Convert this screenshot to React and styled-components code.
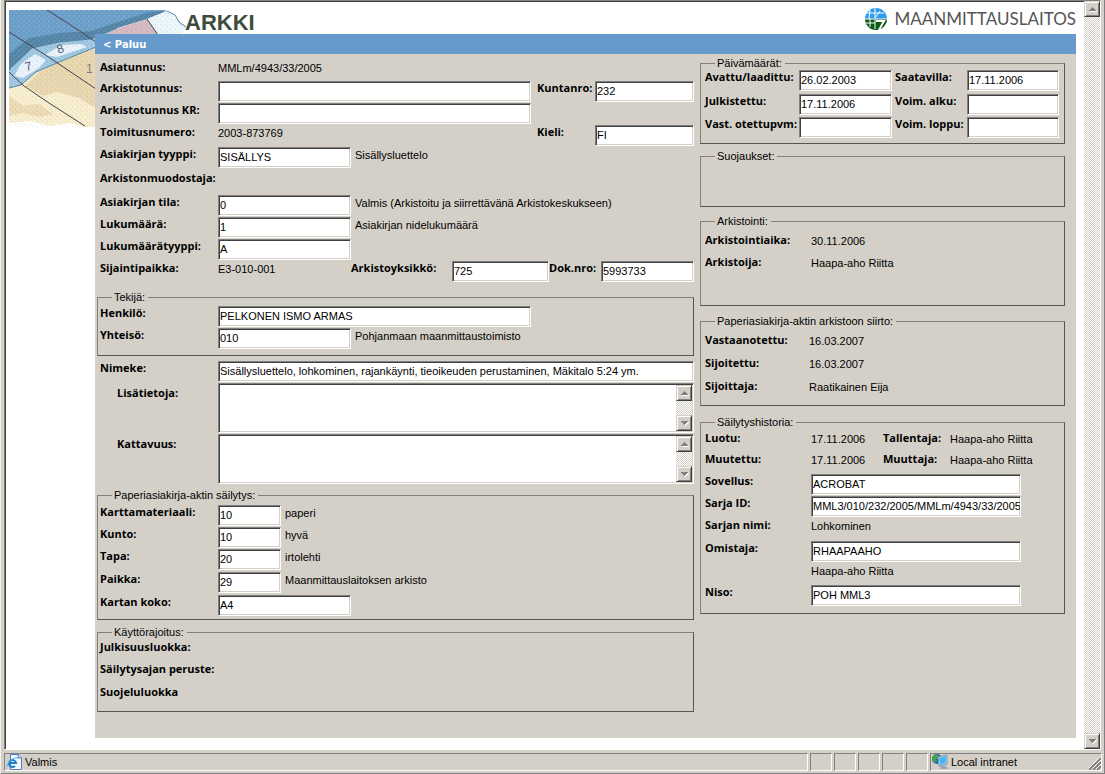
import React from 'react';
import styled, { createGlobalStyle } from 'styled-components';

const GlobalStyle = createGlobalStyle`
  * {
    box-sizing: border-box;
  }

  body {
    margin: 0;
    background-color: #d4d0c8;
    color: #000;
    font-family: "Liberation Sans", Arial, sans-serif;
    font-size: 11px;
  }
`;

const Window = styled.div`
  display: flex;
  flex-direction: column;
  min-height: 100vh;
  padding: 0 2px 2px 3px;
  border-left: 1px solid #f4f2ee;
  border-right: 1px solid #808080;
  border-bottom: 1px solid #808080;
`;

const Pane = styled.div`
  display: flex;
  flex: 1;
  margin-right: 1px;
  border: 1px solid;
  border-color: #808080 #fff #fff #808080;
`;

const Page = styled.main`
  position: relative;
  flex: 1;
  display: flex;
  flex-direction: column;
  padding: 0 8px 11px 89px;
  background-color: #fff;
  border: solid #404040;
  border-width: 1px 0 0 1px;
`;

const Header = styled.header`
  display: flex;
  justify-content: space-between;
  height: 32px;
  padding-left: 90px;
`;

const Title = styled.h1`
  margin: 8px 0 0;
  font-size: 22px;
  line-height: 26px;
  color: #3d4c3d;
`;

const Brand = styled.div`
  display: flex;
  align-items: center;
  gap: 8px;
  padding-top: 1px;
  color: #555;
  font-family: Lato, sans-serif;
  font-size: 17px;
`;

const MapArt = styled.svg`
  position: absolute;
  left: 3px;
  top: 8px;
`;

const Sheet = styled.div`
  position: relative;
  flex: 1;
  background-color: #d4d0c8;
`;

const NavBar = styled.nav`
  height: 20px;
  padding-left: 8px;
  background-color: #6699cc;
  line-height: 20px;
`;

const BackLink = styled.a`
  color: #fff;
  font: bold 10px "DejaVu Sans", Verdana, sans-serif;
  text-decoration: none;
`;

const Columns = styled.form`
  display: grid;
  grid-template-columns: minmax(0, 597fr) minmax(0, 365fr);
  gap: 6px;
  padding: 3px 11px 26px 2px;
`;

const LeftColumn = styled.div`
  padding-top: 3px;
`;

const RightColumn = styled.div``;

const Block = styled.div`
  padding-left: 3px;
  padding-top: ${(p) => p.$top || 0}px;
`;

const Group = styled.fieldset`
  min-width: 0;
  margin: ${(p) => p.$gap || 0}px 0 0;
  padding: ${(p) => p.$top || 0}px 0 ${(p) => p.$bottom || 0}px ${(p) => p.$left || 2}px;
  border: 1px solid;
  border-color: #808080 #555 #555 #808080;
`;

const Legend = styled.legend`
  margin-left: ${(p) => p.$indent || 12}px;
  padding: 0 3px 0 2px;
  line-height: 13px;
`;

const Row = styled.div`
  display: flex;
  align-items: flex-start;
  min-height: ${(p) => p.$h || 22}px;
`;

const labelFont = `
  flex: none;
  font: bold 11px/13px "Open Sans", Verdana, sans-serif;
  white-space: nowrap;
`;

const Label = styled.label`
  ${labelFont}
  width: ${(p) => p.$w || 118}px;
  padding-left: ${(p) => p.$indent || 0}px;
  padding-top: ${(p) => (p.$indent ? 3 : 0)}px;
`;

const Caption = styled.span`
  ${labelFont}
  width: ${(p) => p.$w || 118}px;
`;

const Value = styled.span`
  flex: none;
  width: ${(p) => (p.$w ? `${p.$w}px` : 'auto')};
  line-height: 17px;
  white-space: nowrap;
`;

const Note = styled(Value)`
  margin-left: 4px;
`;

const Side = styled.div`
  display: flex;
  margin-left: auto;
  padding-right: ${(p) => p.$end || 0}px;
`;

const Input = styled.input`
  width: ${(p) => (p.$w ? `${p.$w}px` : '100%')};
  height: 21px;
  min-width: 0;
  margin: 0;
  padding: 0 0 1px 1px;
  border: 1px solid;
  border-color: #808080 #fff #fff #808080;
  border-radius: 0;
  box-shadow: inset 1px 1px #404040, inset -1px -1px #d4d0c8;
  background-color: #fff;
  color: #000;
  font: 11px "Liberation Sans", Arial, sans-serif;
  outline: none;
`;

const MemoFrame = styled.div`
  display: flex;
  flex: 1;
  height: 50px;
  padding: 1px;
  border: 1px solid;
  border-color: #808080 #fff #fff #808080;
  box-shadow: inset 1px 1px #404040, inset -1px -1px #d4d0c8;
  background-color: #fff;
`;

const MemoText = styled.textarea`
  flex: 1;
  margin: 0;
  padding: 2px;
  border: 0;
  background: transparent;
  font: 11px "Liberation Sans", Arial, sans-serif;
  resize: none;
  outline: none;
  overflow: hidden;
`;

const ScrollTrack = styled.div`
  display: flex;
  flex: none;
  flex-direction: column;
  justify-content: space-between;
  width: 16px;
  background: repeating-conic-gradient(#fff 0 25%, #d4d0c8 0 50%) 0 0 / 2px 2px;
`;

const ScrollButton = styled.button`
  display: flex;
  align-items: center;
  justify-content: center;
  width: 16px;
  height: 16px;
  padding: 0;
  border: 1px solid;
  border-color: #d4d0c8 #404040 #404040 #d4d0c8;
  box-shadow: inset 1px 1px #fff, inset -1px -1px #808080;
  background-color: #d4d0c8;
`;

const StatusBar = styled.footer`
  display: flex;
  gap: 2px;
  height: 18px;
  margin-top: 3px;
`;

const StatusCell = styled.div`
  display: flex;
  align-items: center;
  flex: ${(p) => (p.$grow ? '1' : 'none')};
  width: ${(p) => p.$w || 22}px;
  gap: 3px;
  padding-left: 1px;
  border: 1px solid;
  border-color: #808080 #fff #fff #808080;
`;

const Grip = styled.svg`
  margin-left: auto;
  align-self: flex-end;
`;

const Arrow = ({ down }) => (
  <svg width="9" height="6" viewBox="0 0 9 6" shapeRendering="crispEdges">
    <path d={down ? 'M1 2h8L5 6z' : 'M1 6h8L5 2z'} fill="#fff" />
    <path d={down ? 'M0 1h8L4 5z' : 'M0 5h8L4 1z'} fill="#808080" />
  </svg>
);

const Scrollbar = () => (
  <ScrollTrack>
    <ScrollButton type="button" aria-label="Ylös"><Arrow /></ScrollButton>
    <ScrollButton type="button" aria-label="Alas"><Arrow down /></ScrollButton>
  </ScrollTrack>
);

const Field = ({ id, label, value = '', h, lw, w, note, children }) => (
  <Row $h={h}>
    <Label htmlFor={id} $w={lw}>{label}</Label>
    <Input id={id} $w={w} defaultValue={value} />
    {note && <Note>{note}</Note>}
    {children}
  </Row>
);

const Info = ({ label, value, h, lw, w, children }) => (
  <Row $h={h}>
    <Caption $w={lw}>{label}</Caption>
    <Value $w={w}>{value}</Value>
    {children}
  </Row>
);

const Memo = ({ id, label, h }) => (
  <Row $h={h}>
    <Label htmlFor={id} $indent={17}>{label}</Label>
    <MemoFrame>
      <MemoText id={id} />
      <Scrollbar />
    </MemoFrame>
  </Row>
);

const DateRow = ({ h, left, right }) => (
  <Row $h={h}>
    <Label htmlFor={left.id} $w={94}>{left.label}</Label>
    <Input id={left.id} $w={93} defaultValue={left.value} />
    <Side $end={5}>
      <Label htmlFor={right.id} $w={72}>{right.label}</Label>
      <Input id={right.id} $w={92} defaultValue={right.value} />
    </Side>
  </Row>
);

const MapPicture = () => (
  <MapArt width="178" height="117" viewBox="0 0 178 117" aria-hidden="true">
    <defs>
      <pattern id="grain" width="5" height="5" patternUnits="userSpaceOnUse">
        <path d="M0 0h1v1H0zM2 3h1v1H2zM4 1h1v1H4z" fill="#fff" opacity=".2" />
        <path d="M1 4h1v1H1zM3 1h1v1H3z" fill="#46627c" opacity=".15" />
      </pattern>
    </defs>
    {/* land */}
    <path d="M0 74L87 30V117H74L62 113L40 116L22 111L0 113z" fill="#f8edcc" />
    <path d="M16 76L30 62L56 50L87 38V98L70 88L48 82L34 86z" fill="#e8d6ae" />
    <path d="M0 86L14 96L30 94L44 104L30 107L14 103L0 106z" fill="#ecdab2" />
    {/* sea and shore */}
    <path d="M0 0H158L138 9L108 18L82 29L50 32L23 38L3 57L0 62z" fill="#6b9fca" />
    <path d="M0 44L20 28L50 23L82 21L112 11L140 2L158 1L138 9L108 18L82 29L50 32L23 38L3 57L0 62z" fill="#5485a6" />
    <path d="M0 62L3 57L23 38L50 32L82 29L108 18L106 26H87V37L55 50L27 62L12 75L0 78z" fill="#9dc6e0" />
    <path d="M5 66L12 54L26 44L37 50L30 58L14 68zM36 45L52 35L72 34L78 37L48 47z" fill="#e9f2fb" />
    <path d="M104 20L138 9L149 25H98z" fill="#d3b8c2" />
    <path d="M138 9L158 1L177 17L172 25H149z" fill="#eaf6fb" />
    <path d="M0 0H158L177 17L149 25H87V117H0z" fill="url(#grain)" />
    <path d="M0 78L12 75L27 62L55 50L87 37M3 57L23 38L50 32L82 29L108 18" stroke="#56829c" strokeWidth="1" fill="none" />
    <path d="M158 1L166 5L170 12L177 17" stroke="#56829c" strokeWidth="1" fill="none" />
    <path d="M38 0L60 14L87 32M0 22L38 46L87 79M0 62L15 76L40 93L76 116M138 9L149 25" stroke="#45434c" strokeWidth="1" fill="none" />
    <g fill="#55536a" fontSize="12" fontFamily="Liberation Sans, sans-serif">
      <text x="48" y="43" transform="rotate(-20 51 39)">8</text>
      <text x="16" y="60" transform="rotate(-15 20 56)">7</text>
      <text x="77" y="63" opacity=".7">1</text>
    </g>
  </MapArt>
);

const GlobeLogo = () => (
  <svg width="22" height="22" viewBox="0 0 22 22" aria-hidden="true">
    <path d="M0 11a11 11 0 0 1 22 0z" fill="#2f9cf0" />
    <path d="M0 11a11 11 0 0 0 22 0z" fill="#0b5a14" />
    <path d="M0 11h22M10 0v10M2 5h17M5 2L4 11M15 3l-5 7M1 15h9v6M10 11v4M5 11v8" stroke="#fff" strokeWidth="1" fill="none" />
    <path d="M11 13h8l-5 9" stroke="#fff" strokeWidth="2" fill="none" />
  </svg>
);

const BrowserIcon = () => (
  <svg width="16" height="16" viewBox="0 0 16 16" aria-hidden="true">
    <path d="M4.5 .5h8l3 3v12h-11z" fill="#f4f8ff" stroke="#5a78b8" />
    <path d="M12 0v4h4" fill="#c8d8f4" stroke="#5a78b8" />
    <path d="M3 9h7a3.5 3.5 0 1 0-1 3" fill="none" stroke="#1e80cc" strokeWidth="2" />
    <path d="M1 13C1 8 7 3 12 4" fill="none" stroke="#58b0e8" />
  </svg>
);

const IntranetIcon = () => (
  <svg width="16" height="16" viewBox="0 0 16 16" aria-hidden="true">
    <circle cx="5" cy="5" r="5" fill="#2464c8" />
    <path d="M1 2l4-2 2 3-3 2 1 3-3 1-2-4z" fill="#44a63c" />
    <path d="M6 3l9-2v9l-8 2z" fill="#d6e6f6" stroke="#7890b0" />
    <path d="M7 4l7-2v7l-6 2z" fill="#48b8f4" />
    <path d="M9 12h5l2 3H8z" fill="#98a4c0" />
  </svg>
);

const App = () => {
  return (
    <>
      <GlobalStyle />
      <Window>
        <Pane>
          <Page>
            <MapPicture />
            <Header>
              <Title>ARKKI</Title>
              <Brand><GlobeLogo />MAANMITTAUSLAITOS</Brand>
            </Header>
            <Sheet>
              <NavBar><BackLink href="#">&lt; Paluu</BackLink></NavBar>
              <Columns>
                <LeftColumn>
                  <Block>
                    <Info h={21} label="Asiatunnus:" value="MMLm/4943/33/2005" />
                    <Field id="arkistotunnus" label="Arkistotunnus:" w={313}>
                      <Side>
                        <Label htmlFor="kuntanro" $w={58}>Kuntanro:</Label>
                        <Input id="kuntanro" $w={99} defaultValue="232" />
                      </Side>
                    </Field>
                    <Field id="arkistotunnusKr" label="Arkistotunnus KR:" w={313} />
                    <Info label="Toimitusnumero:" value="2003-873769">
                      <Side>
                        <Label htmlFor="kieli" $w={58}>Kieli:</Label>
                        <Input id="kieli" $w={99} defaultValue="FI" />
                      </Side>
                    </Info>
                    <Field id="tyyppi" h={24} label="Asiakirjan tyyppi:" value="SISÄLLYS" w={133} note="Sisällysluettelo" />
                    <Info h={24} label="Arkistonmuodostaja:" />
                    <Field id="tila" label="Asiakirjan tila:" value="0" w={133} note="Valmis (Arkistoitu ja siirrettävänä Arkistokeskukseen)" />
                    <Field id="lukumaara" label="Lukumäärä:" value="1" w={133} note="Asiakirjan nidelukumäärä" />
                    <Field id="lukumaaratyyppi" label="Lukumäärätyyppi:" value="A" w={133} />
                    <Info h={30} label="Sijaintipaikka:" value="E3-010-001">
                      <Side>
                        <Label htmlFor="yksikko" $w={101}>Arkistoyksikkö:</Label>
                        <Input id="yksikko" $w={97} defaultValue="725" />
                        <Label htmlFor="doknro" $w={52}>Dok.nro:</Label>
                        <Input id="doknro" $w={93} defaultValue="5993733" />
                      </Side>
                    </Info>
                  </Block>

                  <Group $top={2} $bottom={5}>
                    <Legend>Tekijä:</Legend>
                    <Field id="henkilo" label="Henkilö:" value="PELKONEN ISMO ARMAS" w={313} />
                    <Field id="yhteiso" label="Yhteisö:" value="010" w={133} note="Pohjanmaan maanmittaustoimisto" />
                  </Group>

                  <Block $top={5}>
                    <Field id="nimeke" label="Nimeke:" value="Sisällysluettelo, lohkominen, rajankäynti, tieoikeuden perustaminen, Mäkitalo 5:24 ym." />
                    <Memo id="lisatietoja" label="Lisätietoja:" h={51} />
                    <Memo id="kattavuus" label="Kattavuus:" h={55} />
                  </Block>

                  <Group $top={3} $bottom={2}>
                    <Legend>Paperiasiakirja-aktin säilytys:</Legend>
                    <Field id="materiaali" label="Karttamateriaali:" value="10" w={63} note="paperi" />
                    <Field id="kunto" label="Kunto:" value="10" w={63} note="hyvä" />
                    <Field id="tapa" h={23} label="Tapa:" value="20" w={63} note="irtolehti" />
                    <Field id="paikka" h={23} label="Paikka:" value="29" w={63} note="Maanmittauslaitoksen arkisto" />
                    <Field id="koko" label="Kartan koko:" value="A4" w={133} />
                  </Group>

                  <Group $gap={6} $top={1} $bottom={4}>
                    <Legend>Käyttörajoitus:</Legend>
                    <Info label="Julkisuusluokka:" />
                    <Info h={23} label="Säilytysajan peruste:" />
                    <Info label="Suojeluluokka" />
                  </Group>
                </LeftColumn>

                <RightColumn>
                  <Group $left={4} $bottom={5}>
                    <Legend $indent={10}>Päivämäärät:</Legend>
                    <DateRow
                      h={24}
                      left={{ id: 'avattu', label: 'Avattu/laadittu:', value: '26.02.2003' }}
                      right={{ id: 'saatavilla', label: 'Saatavilla:', value: '17.11.2006' }}
                    />
                    <DateRow
                      h={23}
                      left={{ id: 'julkistettu', label: 'Julkistettu:', value: '17.11.2006' }}
                      right={{ id: 'alku', label: 'Voim. alku:' }}
                    />
                    <DateRow
                      h={21}
                      left={{ id: 'vast', label: 'Vast. otettupvm:' }}
                      right={{ id: 'loppu', label: 'Voim. loppu:' }}
                    />
                  </Group>

                  <Group $gap={6} $left={4}>
                    <Legend $indent={10}>Suojaukset:</Legend>
                    <Row $h={43} />
                  </Group>

                  <Group $gap={8} $left={4} $top={5} $bottom={28}>
                    <Legend $indent={10}>Arkistointi:</Legend>
                    <Info lw={106} label="Arkistointiaika:" value="30.11.2006" />
                    <Info lw={106} label="Arkistoija:" value="Haapa-aho Riitta" />
                  </Group>

                  <Group $gap={9} $left={4} $top={5} $bottom={3}>
                    <Legend $indent={10}>Paperiasiakirja-aktin arkistoon siirto:</Legend>
                    <Info h={23} lw={104} label="Vastaanotettu:" value="16.03.2007" />
                    <Info h={23} lw={104} label="Sijoitettu:" value="16.03.2007" />
                    <Info h={23} lw={104} label="Sijoittaja:" value="Raatikainen Eija" />
                  </Group>

                  <Group $gap={10} $left={4} $top={2} $bottom={6}>
                    <Legend $indent={10}>Säilytyshistoria:</Legend>
                    <Info h={21} lw={106} w={72} label="Luotu:" value="17.11.2006">
                      <Caption $w={67}>Tallentaja:</Caption>
                      <Value>Haapa-aho Riitta</Value>
                    </Info>
                    <Info lw={106} w={72} label="Muutettu:" value="17.11.2006">
                      <Caption $w={67}>Muuttaja:</Caption>
                      <Value>Haapa-aho Riitta</Value>
                    </Info>
                    <Field id="sovellus" lw={106} w={210} label="Sovellus:" value="ACROBAT" />
                    <Field id="sarja" lw={106} w={210} label="Sarja ID:" value="MML3/010/232/2005/MMLm/4943/33/2005" />
                    <Info h={23} lw={106} label="Sarjan nimi:" value="Lohkominen" />
                    <Field id="omistaja" lw={106} w={210} label="Omistaja:" value="RHAAPAAHO" />
                    <Info lw={106} value="Haapa-aho Riitta" />
                    <Field id="niso" lw={106} w={210} label="Niso:" value="POH MML3" />
                  </Group>
                </RightColumn>
              </Columns>
            </Sheet>
          </Page>
          <Scrollbar />
        </Pane>
        <StatusBar>
          <StatusCell $grow><BrowserIcon />Valmis</StatusCell>
          <StatusCell />
          <StatusCell />
          <StatusCell />
          <StatusCell />
          <StatusCell />
          <StatusCell $w={172}>
            <IntranetIcon />Local intranet
            <Grip width="12" height="12" viewBox="0 0 12 12">
              <path d="M0 12L12 0M4 12L12 4M8 12L12 8" stroke="#808080" strokeWidth="2" />
              <path d="M-1 11L11 -1M3 11L12 2M7 11L12 6" stroke="#fff" strokeWidth="1" />
            </Grip>
          </StatusCell>
        </StatusBar>
      </Window>
    </>
  );
};

export default App;
